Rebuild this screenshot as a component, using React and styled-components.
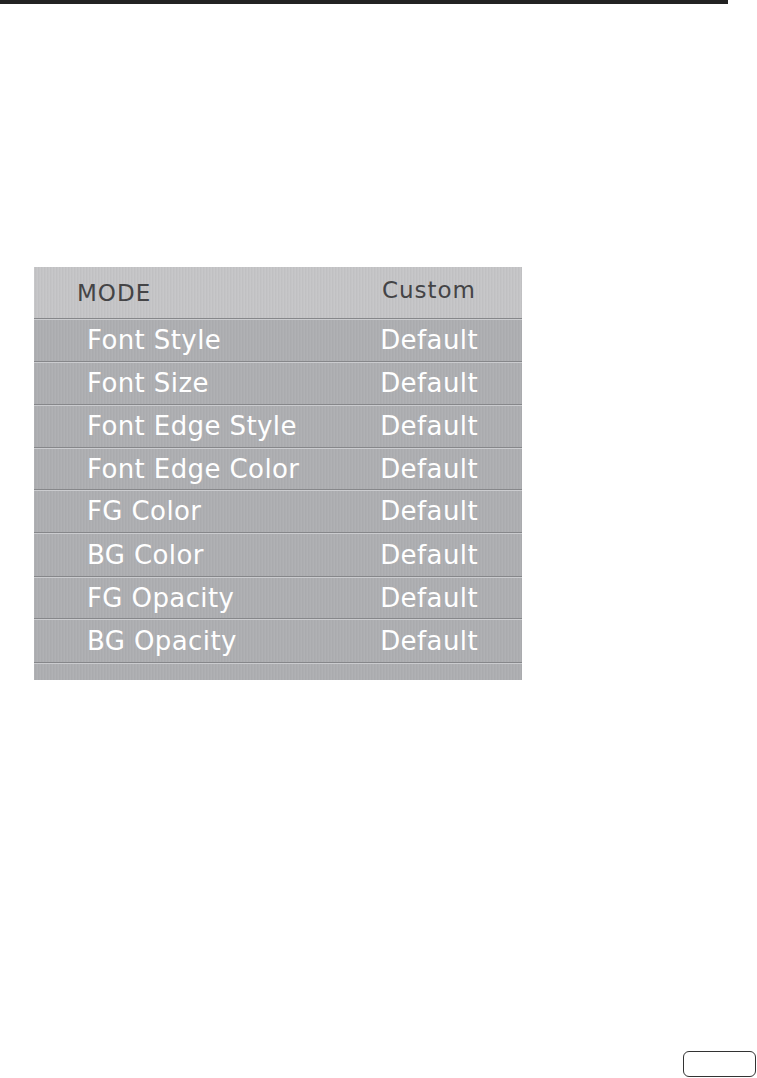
import React from "react";
import styled, { createGlobalStyle } from "styled-components";

const GlobalStyle = createGlobalStyle`
  html, body {
    margin: 0;
    padding: 0;
    background: #ffffff;
  }
  body {
    font-family: "DejaVu Sans", "Liberation Sans", sans-serif;
  }
`;

const Page = styled.div`
  width: 757px;
  height: 1078px;
  display: flex;
  flex-direction: column;
  box-sizing: border-box;
  overflow: hidden;
`;

const TopRule = styled.div`
  width: 728px;
  height: 4px;
  background: #222222;
  flex-shrink: 0;
`;

const Panel = styled.div`
  margin: 263px 0 0 34px;
  width: 488px;
  display: flex;
  flex-direction: column;
  background-color: #adaeb1;
  background-image: repeating-linear-gradient(
    90deg,
    rgba(255, 255, 255, 0.04) 0 1px,
    rgba(0, 0, 0, 0.02) 1px 2px,
    rgba(255, 255, 255, 0) 2px 3px
  );
`;

const Header = styled.div`
  height: 51px;
  display: flex;
  align-items: center;
  justify-content: space-between;
  padding: 0 46px 0 43px;
  background-color: #c4c4c6;
  background-image: repeating-linear-gradient(
    90deg,
    rgba(255, 255, 255, 0.06) 0 1px,
    rgba(0, 0, 0, 0.02) 1px 2px,
    rgba(255, 255, 255, 0) 2px 3px
  );
  color: #444446;
  font-size: 23px;
  letter-spacing: 1px;
`;

const HeaderValue = styled.span`
  position: relative;
  top: -3px;
`;

const Row = styled.div`
  height: ${(p) => p.$height}px;
  box-sizing: border-box;
  display: flex;
  align-items: center;
  justify-content: space-between;
  padding: 0 44px 0 53px;
  border-top: 1px solid #86878a;
  box-shadow: inset 0 1px 0 #cbcccf;
  color: #ffffff;
  font-size: 26px;
  letter-spacing: 0.4px;
`;

const Badge = styled.div`
  margin: auto 1px 1px auto;
  width: 73px;
  height: 26px;
  box-sizing: border-box;
  border: 1.5px solid #333333;
  border-radius: 6px;
`;

const rows = [
  { label: "Font Style", value: "Default", h: 43 },
  { label: "Font Size", value: "Default", h: 43 },
  { label: "Font Edge Style", value: "Default", h: 43 },
  { label: "Font Edge Color", value: "Default", h: 42 },
  { label: "FG Color", value: "Default", h: 43 },
  { label: "BG Color", value: "Default", h: 44 },
  { label: "FG Opacity", value: "Default", h: 42 },
  { label: "BG Opacity", value: "Default", h: 44 },
];

export default function App() {
  return (
    <>
      <GlobalStyle />
      <Page>
        <TopRule />
        <Panel>
          <Header>
            <span>MODE</span>
            <HeaderValue>Custom</HeaderValue>
          </Header>
          {rows.map((r) => (
            <Row key={r.label} $height={r.h}>
              <span>{r.label}</span>
              <span>{r.value}</span>
            </Row>
          ))}
          <Row $height={18} />
        </Panel>
        <Badge />
      </Page>
    </>
  );
}
